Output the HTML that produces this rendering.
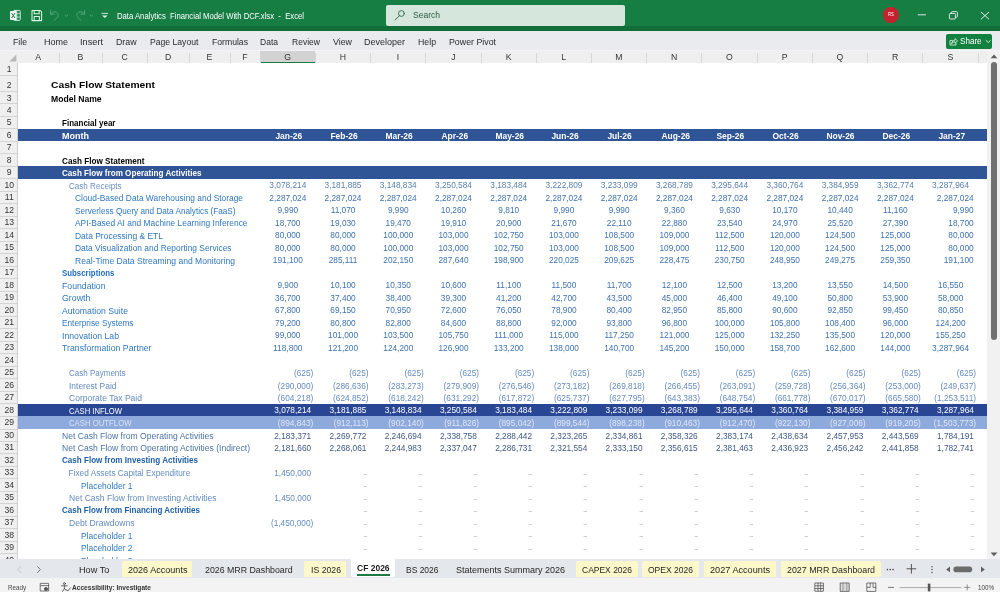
<!DOCTYPE html><html><head><meta charset="utf-8"><title>Excel</title><style>
html,body{margin:0;padding:0;}body{width:1000px;height:592px;position:relative;overflow:hidden;background:#fff;font-family:"Liberation Sans",sans-serif;}
#r{position:absolute;left:0;top:0;width:1000px;height:592px;transform:translateZ(0);will-change:transform;}#r div{position:absolute;}#r span{position:absolute;white-space:pre;line-height:1;display:block;}
#r svg{position:absolute;left:0;top:0;}
</style></head><body><div id="r">
<div style="left:0.00px;top:0.00px;width:1000.00px;height:31.00px;background:#167d43;"></div>
<div style="left:0.00px;top:26.40px;width:1000.00px;height:4.60px;background:#116e39;"></div>
<div style="left:385.60px;top:5.00px;width:239.40px;height:20.80px;background:#d5e7dc;border-radius:2px;"></div>
<div style="left:883.30px;top:7.20px;width:15.80px;height:15.80px;background:#c4222f;border-radius:50%;"></div>
<div style="left:0.00px;top:31.00px;width:1000.00px;height:18.60px;background:#e9ebef;"></div>
<div style="left:0.00px;top:49.60px;width:1000.00px;height:1.80px;background:#f4f4f5;"></div>
<div style="left:946.00px;top:33.50px;width:46.00px;height:15.00px;background:#12803f;border-radius:2px;"></div>
<div style="left:0.00px;top:51.30px;width:987.00px;height:11.90px;background:#efefef;"></div>
<div style="left:260.00px;top:51.30px;width:55.23px;height:11.90px;background:#d2d2d2;"></div>
<div style="left:260.00px;top:62.00px;width:55.23px;height:1.20px;background:#1e7a45;"></div>
<div style="left:0.00px;top:62.70px;width:987.00px;height:0.70px;background:#d0d0d0;"></div>
<div style="left:0.00px;top:62.60px;width:17.50px;height:0.80px;background:#bcbcbc;"></div>
<div style="left:17.50px;top:63.20px;width:969.50px;height:496.00px;background:#ffffff;"></div>
<div style="left:0.00px;top:63.20px;width:17.50px;height:496.00px;background:#efefef;"></div>
<div style="left:17.00px;top:63.20px;width:0.60px;height:496.00px;background:#cfcfcf;"></div>
<div style="left:58.60px;top:52.80px;width:0.80px;height:9.90px;background:#d6d6d6;"></div>
<div style="left:101.60px;top:52.80px;width:0.80px;height:9.90px;background:#d6d6d6;"></div>
<div style="left:147.10px;top:52.80px;width:0.80px;height:9.90px;background:#d6d6d6;"></div>
<div style="left:188.60px;top:52.80px;width:0.80px;height:9.90px;background:#d6d6d6;"></div>
<div style="left:229.60px;top:52.80px;width:0.80px;height:9.90px;background:#d6d6d6;"></div>
<div style="left:259.60px;top:52.80px;width:0.80px;height:9.90px;background:#d6d6d6;"></div>
<div style="left:314.83px;top:52.80px;width:0.80px;height:9.90px;background:#d6d6d6;"></div>
<div style="left:370.06px;top:52.80px;width:0.80px;height:9.90px;background:#d6d6d6;"></div>
<div style="left:425.29px;top:52.80px;width:0.80px;height:9.90px;background:#d6d6d6;"></div>
<div style="left:480.52px;top:52.80px;width:0.80px;height:9.90px;background:#d6d6d6;"></div>
<div style="left:535.75px;top:52.80px;width:0.80px;height:9.90px;background:#d6d6d6;"></div>
<div style="left:590.98px;top:52.80px;width:0.80px;height:9.90px;background:#d6d6d6;"></div>
<div style="left:646.21px;top:52.80px;width:0.80px;height:9.90px;background:#d6d6d6;"></div>
<div style="left:701.44px;top:52.80px;width:0.80px;height:9.90px;background:#d6d6d6;"></div>
<div style="left:756.67px;top:52.80px;width:0.80px;height:9.90px;background:#d6d6d6;"></div>
<div style="left:811.90px;top:52.80px;width:0.80px;height:9.90px;background:#d6d6d6;"></div>
<div style="left:867.13px;top:52.80px;width:0.80px;height:9.90px;background:#d6d6d6;"></div>
<div style="left:922.36px;top:52.80px;width:0.80px;height:9.90px;background:#d6d6d6;"></div>
<div style="left:977.59px;top:52.80px;width:0.80px;height:9.90px;background:#d6d6d6;"></div>
<div style="left:0.00px;top:75.05px;width:17.20px;height:0.70px;background:#d4d4d4;"></div>
<div style="left:0.00px;top:91.45px;width:17.20px;height:0.70px;background:#d4d4d4;"></div>
<div style="left:0.00px;top:103.35px;width:17.20px;height:0.70px;background:#d4d4d4;"></div>
<div style="left:0.00px;top:115.85px;width:17.20px;height:0.70px;background:#d4d4d4;"></div>
<div style="left:0.00px;top:128.35px;width:17.20px;height:0.70px;background:#d4d4d4;"></div>
<div style="left:0.00px;top:140.85px;width:17.20px;height:0.70px;background:#d4d4d4;"></div>
<div style="left:0.00px;top:153.35px;width:17.20px;height:0.70px;background:#d4d4d4;"></div>
<div style="left:0.00px;top:165.85px;width:17.20px;height:0.70px;background:#d4d4d4;"></div>
<div style="left:0.00px;top:178.35px;width:17.20px;height:0.70px;background:#d4d4d4;"></div>
<div style="left:0.00px;top:190.85px;width:17.20px;height:0.70px;background:#d4d4d4;"></div>
<div style="left:0.00px;top:203.35px;width:17.20px;height:0.70px;background:#d4d4d4;"></div>
<div style="left:0.00px;top:215.85px;width:17.20px;height:0.70px;background:#d4d4d4;"></div>
<div style="left:0.00px;top:228.35px;width:17.20px;height:0.70px;background:#d4d4d4;"></div>
<div style="left:0.00px;top:240.85px;width:17.20px;height:0.70px;background:#d4d4d4;"></div>
<div style="left:0.00px;top:253.35px;width:17.20px;height:0.70px;background:#d4d4d4;"></div>
<div style="left:0.00px;top:265.85px;width:17.20px;height:0.70px;background:#d4d4d4;"></div>
<div style="left:0.00px;top:278.35px;width:17.20px;height:0.70px;background:#d4d4d4;"></div>
<div style="left:0.00px;top:290.85px;width:17.20px;height:0.70px;background:#d4d4d4;"></div>
<div style="left:0.00px;top:303.35px;width:17.20px;height:0.70px;background:#d4d4d4;"></div>
<div style="left:0.00px;top:315.85px;width:17.20px;height:0.70px;background:#d4d4d4;"></div>
<div style="left:0.00px;top:328.35px;width:17.20px;height:0.70px;background:#d4d4d4;"></div>
<div style="left:0.00px;top:340.85px;width:17.20px;height:0.70px;background:#d4d4d4;"></div>
<div style="left:0.00px;top:353.35px;width:17.20px;height:0.70px;background:#d4d4d4;"></div>
<div style="left:0.00px;top:365.85px;width:17.20px;height:0.70px;background:#d4d4d4;"></div>
<div style="left:0.00px;top:378.35px;width:17.20px;height:0.70px;background:#d4d4d4;"></div>
<div style="left:0.00px;top:390.85px;width:17.20px;height:0.70px;background:#d4d4d4;"></div>
<div style="left:0.00px;top:403.35px;width:17.20px;height:0.70px;background:#d4d4d4;"></div>
<div style="left:0.00px;top:415.55px;width:17.20px;height:0.70px;background:#d4d4d4;"></div>
<div style="left:0.00px;top:428.65px;width:17.20px;height:0.70px;background:#d4d4d4;"></div>
<div style="left:0.00px;top:440.85px;width:17.20px;height:0.70px;background:#d4d4d4;"></div>
<div style="left:0.00px;top:453.35px;width:17.20px;height:0.70px;background:#d4d4d4;"></div>
<div style="left:0.00px;top:465.85px;width:17.20px;height:0.70px;background:#d4d4d4;"></div>
<div style="left:0.00px;top:478.35px;width:17.20px;height:0.70px;background:#d4d4d4;"></div>
<div style="left:0.00px;top:490.85px;width:17.20px;height:0.70px;background:#d4d4d4;"></div>
<div style="left:0.00px;top:503.35px;width:17.20px;height:0.70px;background:#d4d4d4;"></div>
<div style="left:0.00px;top:515.85px;width:17.20px;height:0.70px;background:#d4d4d4;"></div>
<div style="left:0.00px;top:528.35px;width:17.20px;height:0.70px;background:#d4d4d4;"></div>
<div style="left:0.00px;top:540.85px;width:17.20px;height:0.70px;background:#d4d4d4;"></div>
<div style="left:0.00px;top:553.35px;width:17.20px;height:0.70px;background:#d4d4d4;"></div>
<div style="left:17.50px;top:128.70px;width:969.50px;height:12.50px;background:#2f5597;"></div>
<div style="left:17.50px;top:166.20px;width:969.50px;height:12.50px;background:#2f5597;"></div>
<div style="left:17.50px;top:403.70px;width:969.50px;height:12.20px;background:#294694;"></div>
<div style="left:17.50px;top:415.90px;width:969.50px;height:13.10px;background:#8ea9db;"></div>
<div style="left:987.00px;top:51.30px;width:13.00px;height:507.90px;background:#f1f1f1;"></div>
<div style="left:991.00px;top:61.80px;width:6.00px;height:278.20px;background:#707070;border-radius:3px;"></div>
<span style="top:11.50px;font-size:8.6px;color:#ffffff;left:117.00px;transform:scaleX(0.896);transform-origin:0 50%;">Data Analytics  Financial Model With DCF.xlsx  -  Excel</span>
<span style="top:12.90px;font-size:4.6px;color:#ffffff;left:888.30px;transform:scaleX(0.908);transform-origin:0 50%;">RS</span>
<span style="top:10.90px;font-size:9px;color:#2b5a3f;left:412.80px;transform:scaleX(0.946);transform-origin:0 50%;">Search</span>
<span style="top:38.25px;font-size:9.3px;color:#2a2a2a;left:13.00px;transform:scaleX(0.934);transform-origin:0 50%;">File</span>
<span style="top:38.25px;font-size:9.3px;color:#2a2a2a;left:44.00px;transform:scaleX(0.967);transform-origin:0 50%;">Home</span>
<span style="top:38.25px;font-size:9.3px;color:#2a2a2a;left:80.00px;transform:scaleX(0.989);transform-origin:0 50%;">Insert</span>
<span style="top:38.25px;font-size:9.3px;color:#2a2a2a;left:116.40px;transform:scaleX(0.949);transform-origin:0 50%;">Draw</span>
<span style="top:38.25px;font-size:9.3px;color:#2a2a2a;left:149.60px;transform:scaleX(0.927);transform-origin:0 50%;">Page Layout</span>
<span style="top:38.25px;font-size:9.3px;color:#2a2a2a;left:211.60px;transform:scaleX(0.929);transform-origin:0 50%;">Formulas</span>
<span style="top:38.25px;font-size:9.3px;color:#2a2a2a;left:260.00px;transform:scaleX(0.916);transform-origin:0 50%;">Data</span>
<span style="top:38.25px;font-size:9.3px;color:#2a2a2a;left:292.00px;transform:scaleX(0.919);transform-origin:0 50%;">Review</span>
<span style="top:38.25px;font-size:9.3px;color:#2a2a2a;left:333.00px;transform:scaleX(0.951);transform-origin:0 50%;">View</span>
<span style="top:38.25px;font-size:9.3px;color:#2a2a2a;left:364.00px;transform:scaleX(0.967);transform-origin:0 50%;">Developer</span>
<span style="top:38.25px;font-size:9.3px;color:#2a2a2a;left:418.00px;transform:scaleX(0.941);transform-origin:0 50%;">Help</span>
<span style="top:38.25px;font-size:9.3px;color:#2a2a2a;left:449.00px;transform:scaleX(0.947);transform-origin:0 50%;">Power Pivot</span>
<span style="top:36.80px;font-size:9px;color:#ffffff;left:959.80px;transform:scaleX(0.899);transform-origin:0 50%;">Share</span>
<span style="top:53.05px;font-size:8.7px;color:#353535;left:35.35px;">A</span>
<span style="top:53.05px;font-size:8.7px;color:#353535;left:77.60px;">B</span>
<span style="top:53.05px;font-size:8.7px;color:#353535;left:121.61px;">C</span>
<span style="top:53.05px;font-size:8.7px;color:#353535;left:165.11px;">D</span>
<span style="top:53.05px;font-size:8.7px;color:#353535;left:206.60px;">E</span>
<span style="top:53.05px;font-size:8.7px;color:#353535;left:242.34px;">F</span>
<span style="top:53.05px;font-size:8.7px;color:#353535;left:284.23px;">G</span>
<span style="top:53.05px;font-size:8.7px;color:#353535;left:339.70px;">H</span>
<span style="top:53.05px;font-size:8.7px;color:#353535;left:396.86px;">I</span>
<span style="top:53.05px;font-size:8.7px;color:#353535;left:451.13px;">J</span>
<span style="top:53.05px;font-size:8.7px;color:#353535;left:505.64px;">K</span>
<span style="top:53.05px;font-size:8.7px;color:#353535;left:561.34px;">L</span>
<span style="top:53.05px;font-size:8.7px;color:#353535;left:615.37px;">M</span>
<span style="top:53.05px;font-size:8.7px;color:#353535;left:671.08px;">N</span>
<span style="top:53.05px;font-size:8.7px;color:#353535;left:726.07px;">O</span>
<span style="top:53.05px;font-size:8.7px;color:#353535;left:781.79px;">P</span>
<span style="top:53.05px;font-size:8.7px;color:#353535;left:836.53px;">Q</span>
<span style="top:53.05px;font-size:8.7px;color:#353535;left:892.00px;">R</span>
<span style="top:53.05px;font-size:8.7px;color:#353535;left:947.48px;">S</span>
<span style="top:65.30px;font-size:8.6px;color:#353535;left:6.81px;">1</span>
<span style="top:81.30px;font-size:8.6px;color:#353535;left:6.81px;">2</span>
<span style="top:93.75px;font-size:8.6px;color:#353535;left:6.81px;">3</span>
<span style="top:105.95px;font-size:8.6px;color:#353535;left:6.81px;">4</span>
<span style="top:118.45px;font-size:8.6px;color:#353535;left:6.81px;">5</span>
<span style="top:130.95px;font-size:8.6px;color:#353535;left:6.81px;">6</span>
<span style="top:143.45px;font-size:8.6px;color:#353535;left:6.81px;">7</span>
<span style="top:155.95px;font-size:8.6px;color:#353535;left:6.81px;">8</span>
<span style="top:168.45px;font-size:8.6px;color:#353535;left:6.81px;">9</span>
<span style="top:180.95px;font-size:8.6px;color:#353535;left:4.42px;">10</span>
<span style="top:193.45px;font-size:8.6px;color:#353535;left:4.74px;">11</span>
<span style="top:205.95px;font-size:8.6px;color:#353535;left:4.42px;">12</span>
<span style="top:218.45px;font-size:8.6px;color:#353535;left:4.42px;">13</span>
<span style="top:230.95px;font-size:8.6px;color:#353535;left:4.42px;">14</span>
<span style="top:243.45px;font-size:8.6px;color:#353535;left:4.42px;">15</span>
<span style="top:255.95px;font-size:8.6px;color:#353535;left:4.42px;">16</span>
<span style="top:268.45px;font-size:8.6px;color:#353535;left:4.42px;">17</span>
<span style="top:280.95px;font-size:8.6px;color:#353535;left:4.42px;">18</span>
<span style="top:293.45px;font-size:8.6px;color:#353535;left:4.42px;">19</span>
<span style="top:305.95px;font-size:8.6px;color:#353535;left:4.42px;">20</span>
<span style="top:318.45px;font-size:8.6px;color:#353535;left:4.42px;">21</span>
<span style="top:330.95px;font-size:8.6px;color:#353535;left:4.42px;">22</span>
<span style="top:343.45px;font-size:8.6px;color:#353535;left:4.42px;">23</span>
<span style="top:355.95px;font-size:8.6px;color:#353535;left:4.42px;">24</span>
<span style="top:368.45px;font-size:8.6px;color:#353535;left:4.42px;">25</span>
<span style="top:380.95px;font-size:8.6px;color:#353535;left:4.42px;">26</span>
<span style="top:393.45px;font-size:8.6px;color:#353535;left:4.42px;">27</span>
<span style="top:405.80px;font-size:8.6px;color:#353535;left:4.42px;">28</span>
<span style="top:418.45px;font-size:8.6px;color:#353535;left:4.42px;">29</span>
<span style="top:431.10px;font-size:8.6px;color:#353535;left:4.42px;">30</span>
<span style="top:443.45px;font-size:8.6px;color:#353535;left:4.42px;">31</span>
<span style="top:455.95px;font-size:8.6px;color:#353535;left:4.42px;">32</span>
<span style="top:468.45px;font-size:8.6px;color:#353535;left:4.42px;">33</span>
<span style="top:480.95px;font-size:8.6px;color:#353535;left:4.42px;">34</span>
<span style="top:493.45px;font-size:8.6px;color:#353535;left:4.42px;">35</span>
<span style="top:505.95px;font-size:8.6px;color:#353535;left:4.42px;">36</span>
<span style="top:518.45px;font-size:8.6px;color:#353535;left:4.42px;">37</span>
<span style="top:530.95px;font-size:8.6px;color:#353535;left:4.42px;">38</span>
<span style="top:543.45px;font-size:8.6px;color:#353535;left:4.42px;">39</span>
<span style="top:555.95px;font-size:8.6px;color:#353535;left:4.42px;">40</span>
<span style="top:80.05px;font-size:9.9px;color:#000;font-weight:700;left:50.80px;transform:scaleX(1.041);transform-origin:0 50%;">Cash Flow Statement</span>
<span style="top:94.55px;font-size:8.7px;color:#000;font-weight:700;left:50.80px;transform:scaleX(0.989);transform-origin:0 50%;">Model Name</span>
<span style="top:119.00px;font-size:8.7px;color:#000;font-weight:700;left:62.30px;transform:scaleX(0.923);transform-origin:0 50%;">Financial year</span>
<span style="top:131.50px;font-size:8.7px;color:#fff;font-weight:700;left:62.30px;transform:scaleX(1.036);transform-origin:0 50%;">Month</span>
<span style="top:156.50px;font-size:8.7px;color:#000;font-weight:700;left:62.30px;transform:scaleX(0.939);transform-origin:0 50%;">Cash Flow Statement</span>
<span style="top:169.00px;font-size:8.7px;color:#fff;font-weight:700;left:62.30px;transform:scaleX(0.934);transform-origin:0 50%;">Cash Flow from Operating Activities</span>
<span style="top:131.50px;font-size:8.7px;color:#fff;font-weight:700;left:274.86px;transform:scaleX(0.970);transform-origin:50% 50%;">Jan-26</span>
<span style="top:131.50px;font-size:8.7px;color:#fff;font-weight:700;left:329.86px;transform:scaleX(0.970);transform-origin:50% 50%;">Feb-26</span>
<span style="top:131.50px;font-size:8.7px;color:#fff;font-weight:700;left:385.09px;transform:scaleX(0.970);transform-origin:50% 50%;">Mar-26</span>
<span style="top:131.50px;font-size:8.7px;color:#fff;font-weight:700;left:440.55px;transform:scaleX(0.970);transform-origin:50% 50%;">Apr-26</span>
<span style="top:131.50px;font-size:8.7px;color:#fff;font-weight:700;left:494.84px;transform:scaleX(0.970);transform-origin:50% 50%;">May-26</span>
<span style="top:131.50px;font-size:8.7px;color:#fff;font-weight:700;left:550.78px;transform:scaleX(0.970);transform-origin:50% 50%;">Jun-26</span>
<span style="top:131.50px;font-size:8.7px;color:#fff;font-weight:700;left:607.42px;transform:scaleX(0.970);transform-origin:50% 50%;">Jul-26</span>
<span style="top:131.50px;font-size:8.7px;color:#fff;font-weight:700;left:660.54px;transform:scaleX(0.970);transform-origin:50% 50%;">Aug-26</span>
<span style="top:131.50px;font-size:8.7px;color:#fff;font-weight:700;left:716.23px;transform:scaleX(0.970);transform-origin:50% 50%;">Sep-26</span>
<span style="top:131.50px;font-size:8.7px;color:#fff;font-weight:700;left:772.17px;transform:scaleX(0.970);transform-origin:50% 50%;">Oct-26</span>
<span style="top:131.50px;font-size:8.7px;color:#fff;font-weight:700;left:826.47px;transform:scaleX(0.970);transform-origin:50% 50%;">Nov-26</span>
<span style="top:131.50px;font-size:8.7px;color:#fff;font-weight:700;left:881.92px;transform:scaleX(0.970);transform-origin:50% 50%;">Dec-26</span>
<span style="top:131.50px;font-size:8.7px;color:#fff;font-weight:700;left:937.62px;transform:scaleX(0.970);transform-origin:50% 50%;">Jan-27</span>
<span style="top:181.65px;font-size:8.3px;color:#6b8fbf;left:68.50px;transform:scaleX(0.973);transform-origin:0 50%;">Cash Receipts</span>
<span style="top:194.15px;font-size:8.3px;color:#2f78c0;left:74.50px;transform:scaleX(1.011);transform-origin:0 50%;">Cloud-Based Data Warehousing and Storage</span>
<span style="top:206.65px;font-size:8.3px;color:#2f78c0;left:74.50px;transform:scaleX(0.986);transform-origin:0 50%;">Serverless Query and Data Analytics (FaaS)</span>
<span style="top:219.15px;font-size:8.3px;color:#2f78c0;left:74.50px;transform:scaleX(1.011);transform-origin:0 50%;">API-Based AI and Machine Learning Inference</span>
<span style="top:231.65px;font-size:8.3px;color:#2f78c0;left:74.50px;transform:scaleX(1.020);transform-origin:0 50%;">Data Processing &amp; ETL</span>
<span style="top:244.15px;font-size:8.3px;color:#2f78c0;left:74.50px;transform:scaleX(1.011);transform-origin:0 50%;">Data Visualization and Reporting Services</span>
<span style="top:256.65px;font-size:8.3px;color:#2f78c0;left:74.50px;transform:scaleX(1.032);transform-origin:0 50%;">Real-Time Data Streaming and Monitoring</span>
<span style="top:268.95px;font-size:8.7px;color:#1f6dc0;font-weight:700;left:62.00px;transform:scaleX(0.906);transform-origin:0 50%;">Subscriptions</span>
<span style="top:281.65px;font-size:8.3px;color:#2f78c0;left:62.00px;transform:scaleX(1.047);transform-origin:0 50%;">Foundation</span>
<span style="top:294.15px;font-size:8.3px;color:#2f78c0;left:62.00px;transform:scaleX(1.065);transform-origin:0 50%;">Growth</span>
<span style="top:306.65px;font-size:8.3px;color:#2f78c0;left:62.00px;transform:scaleX(1.045);transform-origin:0 50%;">Automation Suite</span>
<span style="top:319.15px;font-size:8.3px;color:#2f78c0;left:62.00px;transform:scaleX(0.994);transform-origin:0 50%;">Enterprise Systems</span>
<span style="top:331.65px;font-size:8.3px;color:#2f78c0;left:62.00px;transform:scaleX(1.047);transform-origin:0 50%;">Innovation Lab</span>
<span style="top:344.15px;font-size:8.3px;color:#2f78c0;left:62.00px;transform:scaleX(1.053);transform-origin:0 50%;">Transformation Partner</span>
<span style="top:369.15px;font-size:8.3px;color:#648cc0;left:68.50px;transform:scaleX(0.965);transform-origin:0 50%;">Cash Payments</span>
<span style="top:381.65px;font-size:8.3px;color:#648cc0;left:68.50px;transform:scaleX(1.019);transform-origin:0 50%;">Interest Paid</span>
<span style="top:394.15px;font-size:8.3px;color:#648cc0;left:68.50px;transform:scaleX(1.030);transform-origin:0 50%;">Corporate Tax Paid</span>
<span style="top:406.50px;font-size:8.3px;color:#ffffff;left:68.50px;transform:scaleX(0.920);transform-origin:0 50%;">CASH INFLOW</span>
<span style="top:419.15px;font-size:8.3px;color:#d9e2f5;left:68.50px;transform:scaleX(0.935);transform-origin:0 50%;">CASH OUTFLOW</span>
<span style="top:431.80px;font-size:8.3px;color:#4a74a8;left:62.00px;transform:scaleX(1.033);transform-origin:0 50%;">Net Cash Flow from Operating Activities</span>
<span style="top:444.15px;font-size:8.3px;color:#4a74a8;left:62.00px;transform:scaleX(1.035);transform-origin:0 50%;">Net Cash Flow from Operating Activities (Indirect)</span>
<span style="top:456.45px;font-size:8.7px;color:#1f5fa8;font-weight:700;left:62.00px;transform:scaleX(0.929);transform-origin:0 50%;">Cash Flow from Investing Activities</span>
<span style="top:469.15px;font-size:8.3px;color:#648cc0;left:68.50px;">Fixed Assets Capital Expenditure</span>
<span style="top:481.65px;font-size:8.3px;color:#2f78c0;left:81.00px;transform:scaleX(1.015);transform-origin:0 50%;">Placeholder 1</span>
<span style="top:494.15px;font-size:8.3px;color:#648cc0;left:68.50px;transform:scaleX(1.029);transform-origin:0 50%;">Net Cash Flow from Investing Activities</span>
<span style="top:506.45px;font-size:8.7px;color:#1f5fa8;font-weight:700;left:62.00px;transform:scaleX(0.924);transform-origin:0 50%;">Cash Flow from Financing Activities</span>
<span style="top:519.15px;font-size:8.3px;color:#648cc0;left:68.50px;transform:scaleX(1.037);transform-origin:0 50%;">Debt Drawdowns</span>
<span style="top:531.65px;font-size:8.3px;color:#2f78c0;left:81.00px;transform:scaleX(1.015);transform-origin:0 50%;">Placeholder 1</span>
<span style="top:544.15px;font-size:8.3px;color:#2f78c0;left:81.00px;transform:scaleX(1.015);transform-origin:0 50%;">Placeholder 2</span>
<span style="top:556.65px;font-size:8.3px;color:#2f78c0;left:81.00px;transform:scaleX(1.015);transform-origin:0 50%;">Placeholder 3</span>
<span style="top:181.20px;font-size:8.3px;color:#5a80b2;left:269.35px;">3,078,214</span>
<span style="top:181.20px;font-size:8.3px;color:#5a80b2;left:324.58px;">3,181,885</span>
<span style="top:181.20px;font-size:8.3px;color:#5a80b2;left:379.81px;">3,148,834</span>
<span style="top:181.20px;font-size:8.3px;color:#5a80b2;left:435.04px;">3,250,584</span>
<span style="top:181.20px;font-size:8.3px;color:#5a80b2;left:490.27px;">3,183,484</span>
<span style="top:181.20px;font-size:8.3px;color:#5a80b2;left:545.50px;">3,222,809</span>
<span style="top:181.20px;font-size:8.3px;color:#5a80b2;left:600.73px;">3,233,099</span>
<span style="top:181.20px;font-size:8.3px;color:#5a80b2;left:655.96px;">3,268,789</span>
<span style="top:181.20px;font-size:8.3px;color:#5a80b2;left:711.19px;">3,295,644</span>
<span style="top:181.20px;font-size:8.3px;color:#5a80b2;left:766.42px;">3,360,764</span>
<span style="top:181.20px;font-size:8.3px;color:#5a80b2;left:821.65px;">3,384,959</span>
<span style="top:181.20px;font-size:8.3px;color:#5a80b2;left:876.88px;">3,362,774</span>
<span style="top:181.20px;font-size:8.3px;color:#5a80b2;left:932.11px;">3,287,964</span>
<span style="top:193.70px;font-size:8.3px;color:#3f73b0;left:269.35px;">2,287,024</span>
<span style="top:193.70px;font-size:8.3px;color:#3f73b0;left:324.58px;">2,287,024</span>
<span style="top:193.70px;font-size:8.3px;color:#3f73b0;left:379.81px;">2,287,024</span>
<span style="top:193.70px;font-size:8.3px;color:#3f73b0;left:435.04px;">2,287,024</span>
<span style="top:193.70px;font-size:8.3px;color:#3f73b0;left:490.27px;">2,287,024</span>
<span style="top:193.70px;font-size:8.3px;color:#3f73b0;left:545.50px;">2,287,024</span>
<span style="top:193.70px;font-size:8.3px;color:#3f73b0;left:600.73px;">2,287,024</span>
<span style="top:193.70px;font-size:8.3px;color:#3f73b0;left:655.96px;">2,287,024</span>
<span style="top:193.70px;font-size:8.3px;color:#3f73b0;left:711.19px;">2,287,024</span>
<span style="top:193.70px;font-size:8.3px;color:#3f73b0;left:766.42px;">2,287,024</span>
<span style="top:193.70px;font-size:8.3px;color:#3f73b0;left:821.65px;">2,287,024</span>
<span style="top:193.70px;font-size:8.3px;color:#3f73b0;left:876.88px;">2,287,024</span>
<span style="top:193.70px;font-size:8.3px;color:#3f73b0;right:26.31px;">2,287,024</span>
<span style="top:206.20px;font-size:8.3px;color:#3f73b0;left:277.43px;">9,990</span>
<span style="top:206.20px;font-size:8.3px;color:#3f73b0;left:330.66px;">11,070</span>
<span style="top:206.20px;font-size:8.3px;color:#3f73b0;left:387.89px;">9,990</span>
<span style="top:206.20px;font-size:8.3px;color:#3f73b0;left:440.81px;">10,260</span>
<span style="top:206.20px;font-size:8.3px;color:#3f73b0;left:498.35px;">9,810</span>
<span style="top:206.20px;font-size:8.3px;color:#3f73b0;left:553.58px;">9,990</span>
<span style="top:206.20px;font-size:8.3px;color:#3f73b0;left:608.81px;">9,990</span>
<span style="top:206.20px;font-size:8.3px;color:#3f73b0;left:664.04px;">9,360</span>
<span style="top:206.20px;font-size:8.3px;color:#3f73b0;left:719.27px;">9,630</span>
<span style="top:206.20px;font-size:8.3px;color:#3f73b0;left:772.19px;">10,170</span>
<span style="top:206.20px;font-size:8.3px;color:#3f73b0;left:827.42px;">10,440</span>
<span style="top:206.20px;font-size:8.3px;color:#3f73b0;left:882.96px;">11,160</span>
<span style="top:206.20px;font-size:8.3px;color:#3f73b0;right:26.31px;">9,990</span>
<span style="top:218.70px;font-size:8.3px;color:#3f73b0;left:275.12px;">18,700</span>
<span style="top:218.70px;font-size:8.3px;color:#3f73b0;left:330.35px;">19,030</span>
<span style="top:218.70px;font-size:8.3px;color:#3f73b0;left:385.58px;">19,470</span>
<span style="top:218.70px;font-size:8.3px;color:#3f73b0;left:440.81px;">19,910</span>
<span style="top:218.70px;font-size:8.3px;color:#3f73b0;left:496.04px;">20,900</span>
<span style="top:218.70px;font-size:8.3px;color:#3f73b0;left:551.27px;">21,670</span>
<span style="top:218.70px;font-size:8.3px;color:#3f73b0;left:606.81px;">22,110</span>
<span style="top:218.70px;font-size:8.3px;color:#3f73b0;left:661.73px;">22,880</span>
<span style="top:218.70px;font-size:8.3px;color:#3f73b0;left:716.96px;">23,540</span>
<span style="top:218.70px;font-size:8.3px;color:#3f73b0;left:772.19px;">24,970</span>
<span style="top:218.70px;font-size:8.3px;color:#3f73b0;left:827.42px;">25,520</span>
<span style="top:218.70px;font-size:8.3px;color:#3f73b0;left:882.65px;">27,390</span>
<span style="top:218.70px;font-size:8.3px;color:#3f73b0;right:26.31px;">18,700</span>
<span style="top:231.20px;font-size:8.3px;color:#3f73b0;left:275.12px;">80,000</span>
<span style="top:231.20px;font-size:8.3px;color:#3f73b0;left:330.35px;">80,000</span>
<span style="top:231.20px;font-size:8.3px;color:#3f73b0;left:383.28px;">100,000</span>
<span style="top:231.20px;font-size:8.3px;color:#3f73b0;left:438.51px;">103,000</span>
<span style="top:231.20px;font-size:8.3px;color:#3f73b0;left:493.74px;">102,750</span>
<span style="top:231.20px;font-size:8.3px;color:#3f73b0;left:548.97px;">103,000</span>
<span style="top:231.20px;font-size:8.3px;color:#3f73b0;left:604.20px;">108,500</span>
<span style="top:231.20px;font-size:8.3px;color:#3f73b0;left:659.43px;">109,000</span>
<span style="top:231.20px;font-size:8.3px;color:#3f73b0;left:714.96px;">112,500</span>
<span style="top:231.20px;font-size:8.3px;color:#3f73b0;left:769.89px;">120,000</span>
<span style="top:231.20px;font-size:8.3px;color:#3f73b0;left:825.12px;">124,500</span>
<span style="top:231.20px;font-size:8.3px;color:#3f73b0;left:880.35px;">125,000</span>
<span style="top:231.20px;font-size:8.3px;color:#3f73b0;right:26.31px;">80,000</span>
<span style="top:243.70px;font-size:8.3px;color:#3f73b0;left:275.12px;">80,000</span>
<span style="top:243.70px;font-size:8.3px;color:#3f73b0;left:330.35px;">80,000</span>
<span style="top:243.70px;font-size:8.3px;color:#3f73b0;left:383.28px;">100,000</span>
<span style="top:243.70px;font-size:8.3px;color:#3f73b0;left:438.51px;">103,000</span>
<span style="top:243.70px;font-size:8.3px;color:#3f73b0;left:493.74px;">102,750</span>
<span style="top:243.70px;font-size:8.3px;color:#3f73b0;left:548.97px;">103,000</span>
<span style="top:243.70px;font-size:8.3px;color:#3f73b0;left:604.20px;">108,500</span>
<span style="top:243.70px;font-size:8.3px;color:#3f73b0;left:659.43px;">109,000</span>
<span style="top:243.70px;font-size:8.3px;color:#3f73b0;left:714.96px;">112,500</span>
<span style="top:243.70px;font-size:8.3px;color:#3f73b0;left:769.89px;">120,000</span>
<span style="top:243.70px;font-size:8.3px;color:#3f73b0;left:825.12px;">124,500</span>
<span style="top:243.70px;font-size:8.3px;color:#3f73b0;left:880.35px;">125,000</span>
<span style="top:243.70px;font-size:8.3px;color:#3f73b0;right:26.31px;">80,000</span>
<span style="top:256.20px;font-size:8.3px;color:#3f73b0;left:272.81px;">191,100</span>
<span style="top:256.20px;font-size:8.3px;color:#3f73b0;left:328.66px;">285,111</span>
<span style="top:256.20px;font-size:8.3px;color:#3f73b0;left:383.28px;">202,150</span>
<span style="top:256.20px;font-size:8.3px;color:#3f73b0;left:438.51px;">287,640</span>
<span style="top:256.20px;font-size:8.3px;color:#3f73b0;left:493.74px;">198,900</span>
<span style="top:256.20px;font-size:8.3px;color:#3f73b0;left:548.97px;">220,025</span>
<span style="top:256.20px;font-size:8.3px;color:#3f73b0;left:604.20px;">209,625</span>
<span style="top:256.20px;font-size:8.3px;color:#3f73b0;left:659.43px;">228,475</span>
<span style="top:256.20px;font-size:8.3px;color:#3f73b0;left:714.66px;">230,750</span>
<span style="top:256.20px;font-size:8.3px;color:#3f73b0;left:769.89px;">248,950</span>
<span style="top:256.20px;font-size:8.3px;color:#3f73b0;left:825.12px;">249,275</span>
<span style="top:256.20px;font-size:8.3px;color:#3f73b0;left:880.35px;">259,350</span>
<span style="top:256.20px;font-size:8.3px;color:#3f73b0;right:26.31px;">191,100</span>
<span style="top:281.20px;font-size:8.3px;color:#3f73b0;left:277.43px;">9,900</span>
<span style="top:281.20px;font-size:8.3px;color:#3f73b0;left:330.35px;">10,100</span>
<span style="top:281.20px;font-size:8.3px;color:#3f73b0;left:385.58px;">10,350</span>
<span style="top:281.20px;font-size:8.3px;color:#3f73b0;left:440.81px;">10,600</span>
<span style="top:281.20px;font-size:8.3px;color:#3f73b0;left:496.35px;">11,100</span>
<span style="top:281.20px;font-size:8.3px;color:#3f73b0;left:551.58px;">11,500</span>
<span style="top:281.20px;font-size:8.3px;color:#3f73b0;left:606.81px;">11,700</span>
<span style="top:281.20px;font-size:8.3px;color:#3f73b0;left:661.73px;">12,100</span>
<span style="top:281.20px;font-size:8.3px;color:#3f73b0;left:716.96px;">12,500</span>
<span style="top:281.20px;font-size:8.3px;color:#3f73b0;left:772.19px;">13,200</span>
<span style="top:281.20px;font-size:8.3px;color:#3f73b0;left:827.42px;">13,550</span>
<span style="top:281.20px;font-size:8.3px;color:#3f73b0;left:882.65px;">14,500</span>
<span style="top:281.20px;font-size:8.3px;color:#3f73b0;left:937.88px;">16,550</span>
<span style="top:293.70px;font-size:8.3px;color:#3f73b0;left:275.12px;">36,700</span>
<span style="top:293.70px;font-size:8.3px;color:#3f73b0;left:330.35px;">37,400</span>
<span style="top:293.70px;font-size:8.3px;color:#3f73b0;left:385.58px;">38,400</span>
<span style="top:293.70px;font-size:8.3px;color:#3f73b0;left:440.81px;">39,300</span>
<span style="top:293.70px;font-size:8.3px;color:#3f73b0;left:496.04px;">41,200</span>
<span style="top:293.70px;font-size:8.3px;color:#3f73b0;left:551.27px;">42,700</span>
<span style="top:293.70px;font-size:8.3px;color:#3f73b0;left:606.50px;">43,500</span>
<span style="top:293.70px;font-size:8.3px;color:#3f73b0;left:661.73px;">45,000</span>
<span style="top:293.70px;font-size:8.3px;color:#3f73b0;left:716.96px;">46,400</span>
<span style="top:293.70px;font-size:8.3px;color:#3f73b0;left:772.19px;">49,100</span>
<span style="top:293.70px;font-size:8.3px;color:#3f73b0;left:827.42px;">50,800</span>
<span style="top:293.70px;font-size:8.3px;color:#3f73b0;left:882.65px;">53,900</span>
<span style="top:293.70px;font-size:8.3px;color:#3f73b0;left:937.88px;">58,000</span>
<span style="top:306.20px;font-size:8.3px;color:#3f73b0;left:275.12px;">67,800</span>
<span style="top:306.20px;font-size:8.3px;color:#3f73b0;left:330.35px;">69,150</span>
<span style="top:306.20px;font-size:8.3px;color:#3f73b0;left:385.58px;">70,950</span>
<span style="top:306.20px;font-size:8.3px;color:#3f73b0;left:440.81px;">72,600</span>
<span style="top:306.20px;font-size:8.3px;color:#3f73b0;left:496.04px;">76,050</span>
<span style="top:306.20px;font-size:8.3px;color:#3f73b0;left:551.27px;">78,900</span>
<span style="top:306.20px;font-size:8.3px;color:#3f73b0;left:606.50px;">80,400</span>
<span style="top:306.20px;font-size:8.3px;color:#3f73b0;left:661.73px;">82,950</span>
<span style="top:306.20px;font-size:8.3px;color:#3f73b0;left:716.96px;">85,800</span>
<span style="top:306.20px;font-size:8.3px;color:#3f73b0;left:772.19px;">90,600</span>
<span style="top:306.20px;font-size:8.3px;color:#3f73b0;left:827.42px;">92,850</span>
<span style="top:306.20px;font-size:8.3px;color:#3f73b0;left:882.65px;">99,450</span>
<span style="top:306.20px;font-size:8.3px;color:#3f73b0;left:937.88px;">80,850</span>
<span style="top:318.70px;font-size:8.3px;color:#3f73b0;left:275.12px;">79,200</span>
<span style="top:318.70px;font-size:8.3px;color:#3f73b0;left:330.35px;">80,800</span>
<span style="top:318.70px;font-size:8.3px;color:#3f73b0;left:385.58px;">82,800</span>
<span style="top:318.70px;font-size:8.3px;color:#3f73b0;left:440.81px;">84,600</span>
<span style="top:318.70px;font-size:8.3px;color:#3f73b0;left:496.04px;">88,800</span>
<span style="top:318.70px;font-size:8.3px;color:#3f73b0;left:551.27px;">92,000</span>
<span style="top:318.70px;font-size:8.3px;color:#3f73b0;left:606.50px;">93,800</span>
<span style="top:318.70px;font-size:8.3px;color:#3f73b0;left:661.73px;">96,800</span>
<span style="top:318.70px;font-size:8.3px;color:#3f73b0;left:714.66px;">100,000</span>
<span style="top:318.70px;font-size:8.3px;color:#3f73b0;left:769.89px;">105,800</span>
<span style="top:318.70px;font-size:8.3px;color:#3f73b0;left:825.12px;">108,400</span>
<span style="top:318.70px;font-size:8.3px;color:#3f73b0;left:882.65px;">96,000</span>
<span style="top:318.70px;font-size:8.3px;color:#3f73b0;left:935.58px;">124,200</span>
<span style="top:331.20px;font-size:8.3px;color:#3f73b0;left:275.12px;">99,000</span>
<span style="top:331.20px;font-size:8.3px;color:#3f73b0;left:328.05px;">101,000</span>
<span style="top:331.20px;font-size:8.3px;color:#3f73b0;left:383.28px;">103,500</span>
<span style="top:331.20px;font-size:8.3px;color:#3f73b0;left:438.51px;">105,750</span>
<span style="top:331.20px;font-size:8.3px;color:#3f73b0;left:494.35px;">111,000</span>
<span style="top:331.20px;font-size:8.3px;color:#3f73b0;left:549.27px;">115,000</span>
<span style="top:331.20px;font-size:8.3px;color:#3f73b0;left:604.50px;">117,250</span>
<span style="top:331.20px;font-size:8.3px;color:#3f73b0;left:659.43px;">121,000</span>
<span style="top:331.20px;font-size:8.3px;color:#3f73b0;left:714.66px;">125,000</span>
<span style="top:331.20px;font-size:8.3px;color:#3f73b0;left:769.89px;">132,250</span>
<span style="top:331.20px;font-size:8.3px;color:#3f73b0;left:825.12px;">135,500</span>
<span style="top:331.20px;font-size:8.3px;color:#3f73b0;left:880.35px;">120,000</span>
<span style="top:331.20px;font-size:8.3px;color:#3f73b0;left:935.58px;">155,250</span>
<span style="top:343.70px;font-size:8.3px;color:#3f73b0;left:273.12px;">118,800</span>
<span style="top:343.70px;font-size:8.3px;color:#3f73b0;left:328.05px;">121,200</span>
<span style="top:343.70px;font-size:8.3px;color:#3f73b0;left:383.28px;">124,200</span>
<span style="top:343.70px;font-size:8.3px;color:#3f73b0;left:438.51px;">126,900</span>
<span style="top:343.70px;font-size:8.3px;color:#3f73b0;left:493.74px;">133,200</span>
<span style="top:343.70px;font-size:8.3px;color:#3f73b0;left:548.97px;">138,000</span>
<span style="top:343.70px;font-size:8.3px;color:#3f73b0;left:604.20px;">140,700</span>
<span style="top:343.70px;font-size:8.3px;color:#3f73b0;left:659.43px;">145,200</span>
<span style="top:343.70px;font-size:8.3px;color:#3f73b0;left:714.66px;">150,000</span>
<span style="top:343.70px;font-size:8.3px;color:#3f73b0;left:769.89px;">158,700</span>
<span style="top:343.70px;font-size:8.3px;color:#3f73b0;left:825.12px;">162,600</span>
<span style="top:343.70px;font-size:8.3px;color:#3f73b0;left:880.35px;">144,000</span>
<span style="top:343.70px;font-size:8.3px;color:#3f73b0;left:932.11px;">3,287,964</span>
<span style="top:369.00px;font-size:8.3px;color:#648cc0;right:686.67px;">(625)</span>
<span style="top:369.00px;font-size:8.3px;color:#648cc0;right:631.44px;">(625)</span>
<span style="top:369.00px;font-size:8.3px;color:#648cc0;right:576.21px;">(625)</span>
<span style="top:369.00px;font-size:8.3px;color:#648cc0;right:520.98px;">(625)</span>
<span style="top:369.00px;font-size:8.3px;color:#648cc0;right:465.75px;">(625)</span>
<span style="top:369.00px;font-size:8.3px;color:#648cc0;right:410.52px;">(625)</span>
<span style="top:369.00px;font-size:8.3px;color:#648cc0;right:355.29px;">(625)</span>
<span style="top:369.00px;font-size:8.3px;color:#648cc0;right:300.06px;">(625)</span>
<span style="top:369.00px;font-size:8.3px;color:#648cc0;right:244.83px;">(625)</span>
<span style="top:369.00px;font-size:8.3px;color:#648cc0;right:189.60px;">(625)</span>
<span style="top:369.00px;font-size:8.3px;color:#648cc0;right:134.37px;">(625)</span>
<span style="top:369.00px;font-size:8.3px;color:#648cc0;right:79.14px;">(625)</span>
<span style="top:369.00px;font-size:8.3px;color:#648cc0;right:23.91px;">(625)</span>
<span style="top:381.50px;font-size:8.3px;color:#648cc0;right:686.67px;">(290,000)</span>
<span style="top:381.50px;font-size:8.3px;color:#648cc0;right:631.44px;">(286,636)</span>
<span style="top:381.50px;font-size:8.3px;color:#648cc0;right:576.21px;">(283,273)</span>
<span style="top:381.50px;font-size:8.3px;color:#648cc0;right:520.98px;">(279,909)</span>
<span style="top:381.50px;font-size:8.3px;color:#648cc0;right:465.75px;">(276,546)</span>
<span style="top:381.50px;font-size:8.3px;color:#648cc0;right:410.52px;">(273,182)</span>
<span style="top:381.50px;font-size:8.3px;color:#648cc0;right:355.29px;">(269,818)</span>
<span style="top:381.50px;font-size:8.3px;color:#648cc0;right:300.06px;">(266,455)</span>
<span style="top:381.50px;font-size:8.3px;color:#648cc0;right:244.83px;">(263,091)</span>
<span style="top:381.50px;font-size:8.3px;color:#648cc0;right:189.60px;">(259,728)</span>
<span style="top:381.50px;font-size:8.3px;color:#648cc0;right:134.37px;">(256,364)</span>
<span style="top:381.50px;font-size:8.3px;color:#648cc0;right:79.14px;">(253,000)</span>
<span style="top:381.50px;font-size:8.3px;color:#648cc0;right:23.91px;">(249,637)</span>
<span style="top:394.00px;font-size:8.3px;color:#648cc0;right:686.67px;">(604,218)</span>
<span style="top:394.00px;font-size:8.3px;color:#648cc0;right:631.44px;">(624,852)</span>
<span style="top:394.00px;font-size:8.3px;color:#648cc0;right:576.21px;">(618,242)</span>
<span style="top:394.00px;font-size:8.3px;color:#648cc0;right:520.98px;">(631,292)</span>
<span style="top:394.00px;font-size:8.3px;color:#648cc0;right:465.75px;">(617,872)</span>
<span style="top:394.00px;font-size:8.3px;color:#648cc0;right:410.52px;">(625,737)</span>
<span style="top:394.00px;font-size:8.3px;color:#648cc0;right:355.29px;">(627,795)</span>
<span style="top:394.00px;font-size:8.3px;color:#648cc0;right:300.06px;">(643,383)</span>
<span style="top:394.00px;font-size:8.3px;color:#648cc0;right:244.83px;">(648,754)</span>
<span style="top:394.00px;font-size:8.3px;color:#648cc0;right:189.60px;">(661,778)</span>
<span style="top:394.00px;font-size:8.3px;color:#648cc0;right:134.37px;">(670,017)</span>
<span style="top:394.00px;font-size:8.3px;color:#648cc0;right:79.14px;">(665,580)</span>
<span style="top:394.00px;font-size:8.3px;color:#648cc0;right:23.91px;">(1,253,511)</span>
<span style="top:406.35px;font-size:8.3px;color:#ffffff;right:688.87px;">3,078,214</span>
<span style="top:406.35px;font-size:8.3px;color:#ffffff;right:633.64px;">3,181,885</span>
<span style="top:406.35px;font-size:8.3px;color:#ffffff;right:578.41px;">3,148,834</span>
<span style="top:406.35px;font-size:8.3px;color:#ffffff;right:523.18px;">3,250,584</span>
<span style="top:406.35px;font-size:8.3px;color:#ffffff;right:467.95px;">3,183,484</span>
<span style="top:406.35px;font-size:8.3px;color:#ffffff;right:412.72px;">3,222,809</span>
<span style="top:406.35px;font-size:8.3px;color:#ffffff;right:357.49px;">3,233,099</span>
<span style="top:406.35px;font-size:8.3px;color:#ffffff;right:302.26px;">3,268,789</span>
<span style="top:406.35px;font-size:8.3px;color:#ffffff;right:247.03px;">3,295,644</span>
<span style="top:406.35px;font-size:8.3px;color:#ffffff;right:191.80px;">3,360,764</span>
<span style="top:406.35px;font-size:8.3px;color:#ffffff;right:136.57px;">3,384,959</span>
<span style="top:406.35px;font-size:8.3px;color:#ffffff;right:81.34px;">3,362,774</span>
<span style="top:406.35px;font-size:8.3px;color:#ffffff;right:26.11px;">3,287,964</span>
<span style="top:419.00px;font-size:8.3px;color:#e0e7f7;right:686.67px;">(894,843)</span>
<span style="top:419.00px;font-size:8.3px;color:#e0e7f7;right:631.44px;">(912,113)</span>
<span style="top:419.00px;font-size:8.3px;color:#e0e7f7;right:576.21px;">(902,140)</span>
<span style="top:419.00px;font-size:8.3px;color:#e0e7f7;right:520.98px;">(911,826)</span>
<span style="top:419.00px;font-size:8.3px;color:#e0e7f7;right:465.75px;">(895,042)</span>
<span style="top:419.00px;font-size:8.3px;color:#e0e7f7;right:410.52px;">(899,544)</span>
<span style="top:419.00px;font-size:8.3px;color:#e0e7f7;right:355.29px;">(898,238)</span>
<span style="top:419.00px;font-size:8.3px;color:#e0e7f7;right:300.06px;">(910,463)</span>
<span style="top:419.00px;font-size:8.3px;color:#e0e7f7;right:244.83px;">(912,470)</span>
<span style="top:419.00px;font-size:8.3px;color:#e0e7f7;right:189.60px;">(922,130)</span>
<span style="top:419.00px;font-size:8.3px;color:#e0e7f7;right:134.37px;">(927,006)</span>
<span style="top:419.00px;font-size:8.3px;color:#e0e7f7;right:79.14px;">(919,205)</span>
<span style="top:419.00px;font-size:8.3px;color:#e0e7f7;right:23.91px;">(1,503,773)</span>
<span style="top:431.65px;font-size:8.3px;color:#3d5984;right:688.87px;">2,183,371</span>
<span style="top:431.65px;font-size:8.3px;color:#3d5984;right:633.64px;">2,269,772</span>
<span style="top:431.65px;font-size:8.3px;color:#3d5984;right:578.41px;">2,246,694</span>
<span style="top:431.65px;font-size:8.3px;color:#3d5984;right:523.18px;">2,338,758</span>
<span style="top:431.65px;font-size:8.3px;color:#3d5984;right:467.95px;">2,288,442</span>
<span style="top:431.65px;font-size:8.3px;color:#3d5984;right:412.72px;">2,323,265</span>
<span style="top:431.65px;font-size:8.3px;color:#3d5984;right:357.49px;">2,334,861</span>
<span style="top:431.65px;font-size:8.3px;color:#3d5984;right:302.26px;">2,358,326</span>
<span style="top:431.65px;font-size:8.3px;color:#3d5984;right:247.03px;">2,383,174</span>
<span style="top:431.65px;font-size:8.3px;color:#3d5984;right:191.80px;">2,438,634</span>
<span style="top:431.65px;font-size:8.3px;color:#3d5984;right:136.57px;">2,457,953</span>
<span style="top:431.65px;font-size:8.3px;color:#3d5984;right:81.34px;">2,443,569</span>
<span style="top:431.65px;font-size:8.3px;color:#3d5984;right:26.11px;">1,784,191</span>
<span style="top:444.00px;font-size:8.3px;color:#3d5984;right:688.87px;">2,181,660</span>
<span style="top:444.00px;font-size:8.3px;color:#3d5984;right:633.64px;">2,268,061</span>
<span style="top:444.00px;font-size:8.3px;color:#3d5984;right:578.41px;">2,244,983</span>
<span style="top:444.00px;font-size:8.3px;color:#3d5984;right:523.18px;">2,337,047</span>
<span style="top:444.00px;font-size:8.3px;color:#3d5984;right:467.95px;">2,286,731</span>
<span style="top:444.00px;font-size:8.3px;color:#3d5984;right:412.72px;">2,321,554</span>
<span style="top:444.00px;font-size:8.3px;color:#3d5984;right:357.49px;">2,333,150</span>
<span style="top:444.00px;font-size:8.3px;color:#3d5984;right:302.26px;">2,356,615</span>
<span style="top:444.00px;font-size:8.3px;color:#3d5984;right:247.03px;">2,381,463</span>
<span style="top:444.00px;font-size:8.3px;color:#3d5984;right:191.80px;">2,436,923</span>
<span style="top:444.00px;font-size:8.3px;color:#3d5984;right:136.57px;">2,456,242</span>
<span style="top:444.00px;font-size:8.3px;color:#3d5984;right:81.34px;">2,441,858</span>
<span style="top:444.00px;font-size:8.3px;color:#3d5984;right:26.11px;">1,782,741</span>
<span style="top:469.00px;font-size:8.3px;color:#648cc0;right:688.87px;">1,450,000</span>
<span style="top:469.50px;font-size:8.3px;color:#b9bfca;right:632.74px;transform:scaleX(1.700);transform-origin:100% 50%;">-</span>
<span style="top:469.50px;font-size:8.3px;color:#b9bfca;right:577.51px;transform:scaleX(1.700);transform-origin:100% 50%;">-</span>
<span style="top:469.50px;font-size:8.3px;color:#b9bfca;right:522.28px;transform:scaleX(1.700);transform-origin:100% 50%;">-</span>
<span style="top:469.50px;font-size:8.3px;color:#b9bfca;right:467.05px;transform:scaleX(1.700);transform-origin:100% 50%;">-</span>
<span style="top:469.50px;font-size:8.3px;color:#b9bfca;right:411.82px;transform:scaleX(1.700);transform-origin:100% 50%;">-</span>
<span style="top:469.50px;font-size:8.3px;color:#b9bfca;right:356.59px;transform:scaleX(1.700);transform-origin:100% 50%;">-</span>
<span style="top:469.50px;font-size:8.3px;color:#b9bfca;right:301.36px;transform:scaleX(1.700);transform-origin:100% 50%;">-</span>
<span style="top:469.50px;font-size:8.3px;color:#b9bfca;right:246.13px;transform:scaleX(1.700);transform-origin:100% 50%;">-</span>
<span style="top:469.50px;font-size:8.3px;color:#b9bfca;right:190.90px;transform:scaleX(1.700);transform-origin:100% 50%;">-</span>
<span style="top:469.50px;font-size:8.3px;color:#b9bfca;right:135.67px;transform:scaleX(1.700);transform-origin:100% 50%;">-</span>
<span style="top:469.50px;font-size:8.3px;color:#b9bfca;right:80.44px;transform:scaleX(1.700);transform-origin:100% 50%;">-</span>
<span style="top:469.50px;font-size:8.3px;color:#b9bfca;right:25.21px;transform:scaleX(1.700);transform-origin:100% 50%;">-</span>
<span style="top:482.00px;font-size:8.3px;color:#b9bfca;right:632.74px;transform:scaleX(1.700);transform-origin:100% 50%;">-</span>
<span style="top:482.00px;font-size:8.3px;color:#b9bfca;right:577.51px;transform:scaleX(1.700);transform-origin:100% 50%;">-</span>
<span style="top:482.00px;font-size:8.3px;color:#b9bfca;right:522.28px;transform:scaleX(1.700);transform-origin:100% 50%;">-</span>
<span style="top:482.00px;font-size:8.3px;color:#b9bfca;right:467.05px;transform:scaleX(1.700);transform-origin:100% 50%;">-</span>
<span style="top:482.00px;font-size:8.3px;color:#b9bfca;right:411.82px;transform:scaleX(1.700);transform-origin:100% 50%;">-</span>
<span style="top:482.00px;font-size:8.3px;color:#b9bfca;right:356.59px;transform:scaleX(1.700);transform-origin:100% 50%;">-</span>
<span style="top:482.00px;font-size:8.3px;color:#b9bfca;right:301.36px;transform:scaleX(1.700);transform-origin:100% 50%;">-</span>
<span style="top:482.00px;font-size:8.3px;color:#b9bfca;right:246.13px;transform:scaleX(1.700);transform-origin:100% 50%;">-</span>
<span style="top:482.00px;font-size:8.3px;color:#b9bfca;right:190.90px;transform:scaleX(1.700);transform-origin:100% 50%;">-</span>
<span style="top:482.00px;font-size:8.3px;color:#b9bfca;right:135.67px;transform:scaleX(1.700);transform-origin:100% 50%;">-</span>
<span style="top:482.00px;font-size:8.3px;color:#b9bfca;right:80.44px;transform:scaleX(1.700);transform-origin:100% 50%;">-</span>
<span style="top:482.00px;font-size:8.3px;color:#b9bfca;right:25.21px;transform:scaleX(1.700);transform-origin:100% 50%;">-</span>
<span style="top:494.00px;font-size:8.3px;color:#648cc0;right:688.87px;">1,450,000</span>
<span style="top:494.50px;font-size:8.3px;color:#b9bfca;right:632.74px;transform:scaleX(1.700);transform-origin:100% 50%;">-</span>
<span style="top:494.50px;font-size:8.3px;color:#b9bfca;right:577.51px;transform:scaleX(1.700);transform-origin:100% 50%;">-</span>
<span style="top:494.50px;font-size:8.3px;color:#b9bfca;right:522.28px;transform:scaleX(1.700);transform-origin:100% 50%;">-</span>
<span style="top:494.50px;font-size:8.3px;color:#b9bfca;right:467.05px;transform:scaleX(1.700);transform-origin:100% 50%;">-</span>
<span style="top:494.50px;font-size:8.3px;color:#b9bfca;right:411.82px;transform:scaleX(1.700);transform-origin:100% 50%;">-</span>
<span style="top:494.50px;font-size:8.3px;color:#b9bfca;right:356.59px;transform:scaleX(1.700);transform-origin:100% 50%;">-</span>
<span style="top:494.50px;font-size:8.3px;color:#b9bfca;right:301.36px;transform:scaleX(1.700);transform-origin:100% 50%;">-</span>
<span style="top:494.50px;font-size:8.3px;color:#b9bfca;right:246.13px;transform:scaleX(1.700);transform-origin:100% 50%;">-</span>
<span style="top:494.50px;font-size:8.3px;color:#b9bfca;right:190.90px;transform:scaleX(1.700);transform-origin:100% 50%;">-</span>
<span style="top:494.50px;font-size:8.3px;color:#b9bfca;right:135.67px;transform:scaleX(1.700);transform-origin:100% 50%;">-</span>
<span style="top:494.50px;font-size:8.3px;color:#b9bfca;right:80.44px;transform:scaleX(1.700);transform-origin:100% 50%;">-</span>
<span style="top:494.50px;font-size:8.3px;color:#b9bfca;right:25.21px;transform:scaleX(1.700);transform-origin:100% 50%;">-</span>
<span style="top:507.00px;font-size:8.3px;color:#b9bfca;right:632.74px;transform:scaleX(1.700);transform-origin:100% 50%;">-</span>
<span style="top:507.00px;font-size:8.3px;color:#b9bfca;right:577.51px;transform:scaleX(1.700);transform-origin:100% 50%;">-</span>
<span style="top:507.00px;font-size:8.3px;color:#b9bfca;right:522.28px;transform:scaleX(1.700);transform-origin:100% 50%;">-</span>
<span style="top:507.00px;font-size:8.3px;color:#b9bfca;right:467.05px;transform:scaleX(1.700);transform-origin:100% 50%;">-</span>
<span style="top:507.00px;font-size:8.3px;color:#b9bfca;right:411.82px;transform:scaleX(1.700);transform-origin:100% 50%;">-</span>
<span style="top:507.00px;font-size:8.3px;color:#b9bfca;right:356.59px;transform:scaleX(1.700);transform-origin:100% 50%;">-</span>
<span style="top:507.00px;font-size:8.3px;color:#b9bfca;right:301.36px;transform:scaleX(1.700);transform-origin:100% 50%;">-</span>
<span style="top:507.00px;font-size:8.3px;color:#b9bfca;right:246.13px;transform:scaleX(1.700);transform-origin:100% 50%;">-</span>
<span style="top:507.00px;font-size:8.3px;color:#b9bfca;right:190.90px;transform:scaleX(1.700);transform-origin:100% 50%;">-</span>
<span style="top:507.00px;font-size:8.3px;color:#b9bfca;right:135.67px;transform:scaleX(1.700);transform-origin:100% 50%;">-</span>
<span style="top:507.00px;font-size:8.3px;color:#b9bfca;right:80.44px;transform:scaleX(1.700);transform-origin:100% 50%;">-</span>
<span style="top:507.00px;font-size:8.3px;color:#b9bfca;right:25.21px;transform:scaleX(1.700);transform-origin:100% 50%;">-</span>
<span style="top:519.00px;font-size:8.3px;color:#648cc0;right:686.67px;">(1,450,000)</span>
<span style="top:519.50px;font-size:8.3px;color:#b9bfca;right:632.74px;transform:scaleX(1.700);transform-origin:100% 50%;">-</span>
<span style="top:519.50px;font-size:8.3px;color:#b9bfca;right:577.51px;transform:scaleX(1.700);transform-origin:100% 50%;">-</span>
<span style="top:519.50px;font-size:8.3px;color:#b9bfca;right:522.28px;transform:scaleX(1.700);transform-origin:100% 50%;">-</span>
<span style="top:519.50px;font-size:8.3px;color:#b9bfca;right:467.05px;transform:scaleX(1.700);transform-origin:100% 50%;">-</span>
<span style="top:519.50px;font-size:8.3px;color:#b9bfca;right:411.82px;transform:scaleX(1.700);transform-origin:100% 50%;">-</span>
<span style="top:519.50px;font-size:8.3px;color:#b9bfca;right:356.59px;transform:scaleX(1.700);transform-origin:100% 50%;">-</span>
<span style="top:519.50px;font-size:8.3px;color:#b9bfca;right:301.36px;transform:scaleX(1.700);transform-origin:100% 50%;">-</span>
<span style="top:519.50px;font-size:8.3px;color:#b9bfca;right:246.13px;transform:scaleX(1.700);transform-origin:100% 50%;">-</span>
<span style="top:519.50px;font-size:8.3px;color:#b9bfca;right:190.90px;transform:scaleX(1.700);transform-origin:100% 50%;">-</span>
<span style="top:519.50px;font-size:8.3px;color:#b9bfca;right:135.67px;transform:scaleX(1.700);transform-origin:100% 50%;">-</span>
<span style="top:519.50px;font-size:8.3px;color:#b9bfca;right:80.44px;transform:scaleX(1.700);transform-origin:100% 50%;">-</span>
<span style="top:519.50px;font-size:8.3px;color:#b9bfca;right:25.21px;transform:scaleX(1.700);transform-origin:100% 50%;">-</span>
<span style="top:532.00px;font-size:8.3px;color:#b9bfca;right:632.74px;transform:scaleX(1.700);transform-origin:100% 50%;">-</span>
<span style="top:532.00px;font-size:8.3px;color:#b9bfca;right:577.51px;transform:scaleX(1.700);transform-origin:100% 50%;">-</span>
<span style="top:532.00px;font-size:8.3px;color:#b9bfca;right:522.28px;transform:scaleX(1.700);transform-origin:100% 50%;">-</span>
<span style="top:532.00px;font-size:8.3px;color:#b9bfca;right:467.05px;transform:scaleX(1.700);transform-origin:100% 50%;">-</span>
<span style="top:532.00px;font-size:8.3px;color:#b9bfca;right:411.82px;transform:scaleX(1.700);transform-origin:100% 50%;">-</span>
<span style="top:532.00px;font-size:8.3px;color:#b9bfca;right:356.59px;transform:scaleX(1.700);transform-origin:100% 50%;">-</span>
<span style="top:532.00px;font-size:8.3px;color:#b9bfca;right:301.36px;transform:scaleX(1.700);transform-origin:100% 50%;">-</span>
<span style="top:532.00px;font-size:8.3px;color:#b9bfca;right:246.13px;transform:scaleX(1.700);transform-origin:100% 50%;">-</span>
<span style="top:532.00px;font-size:8.3px;color:#b9bfca;right:190.90px;transform:scaleX(1.700);transform-origin:100% 50%;">-</span>
<span style="top:532.00px;font-size:8.3px;color:#b9bfca;right:135.67px;transform:scaleX(1.700);transform-origin:100% 50%;">-</span>
<span style="top:532.00px;font-size:8.3px;color:#b9bfca;right:80.44px;transform:scaleX(1.700);transform-origin:100% 50%;">-</span>
<span style="top:532.00px;font-size:8.3px;color:#b9bfca;right:25.21px;transform:scaleX(1.700);transform-origin:100% 50%;">-</span>
<span style="top:544.50px;font-size:8.3px;color:#b9bfca;right:632.74px;transform:scaleX(1.700);transform-origin:100% 50%;">-</span>
<span style="top:544.50px;font-size:8.3px;color:#b9bfca;right:577.51px;transform:scaleX(1.700);transform-origin:100% 50%;">-</span>
<span style="top:544.50px;font-size:8.3px;color:#b9bfca;right:522.28px;transform:scaleX(1.700);transform-origin:100% 50%;">-</span>
<span style="top:544.50px;font-size:8.3px;color:#b9bfca;right:467.05px;transform:scaleX(1.700);transform-origin:100% 50%;">-</span>
<span style="top:544.50px;font-size:8.3px;color:#b9bfca;right:411.82px;transform:scaleX(1.700);transform-origin:100% 50%;">-</span>
<span style="top:544.50px;font-size:8.3px;color:#b9bfca;right:356.59px;transform:scaleX(1.700);transform-origin:100% 50%;">-</span>
<span style="top:544.50px;font-size:8.3px;color:#b9bfca;right:301.36px;transform:scaleX(1.700);transform-origin:100% 50%;">-</span>
<span style="top:544.50px;font-size:8.3px;color:#b9bfca;right:246.13px;transform:scaleX(1.700);transform-origin:100% 50%;">-</span>
<span style="top:544.50px;font-size:8.3px;color:#b9bfca;right:190.90px;transform:scaleX(1.700);transform-origin:100% 50%;">-</span>
<span style="top:544.50px;font-size:8.3px;color:#b9bfca;right:135.67px;transform:scaleX(1.700);transform-origin:100% 50%;">-</span>
<span style="top:544.50px;font-size:8.3px;color:#b9bfca;right:80.44px;transform:scaleX(1.700);transform-origin:100% 50%;">-</span>
<span style="top:544.50px;font-size:8.3px;color:#b9bfca;right:25.21px;transform:scaleX(1.700);transform-origin:100% 50%;">-</span>
<div style="left:0.00px;top:559.20px;width:1000.00px;height:18.80px;background:#e4e7eb;"></div>
<div style="left:0.00px;top:578.00px;width:1000.00px;height:14.00px;background:#f3f3f3;"></div>
<div style="left:122.00px;top:560.80px;width:70.00px;height:16.40px;background:#fcf8ca;border-radius:1.5px;"></div>
<div style="left:304.40px;top:560.80px;width:42.00px;height:16.40px;background:#fcf8ca;border-radius:1.5px;"></div>
<div style="left:576.00px;top:560.80px;width:62.00px;height:16.40px;background:#fcf8ca;border-radius:1.5px;"></div>
<div style="left:642.00px;top:560.80px;width:57.00px;height:16.40px;background:#fcf8ca;border-radius:1.5px;"></div>
<div style="left:704.00px;top:560.80px;width:72.00px;height:16.40px;background:#fcf8ca;border-radius:1.5px;"></div>
<div style="left:781.00px;top:560.80px;width:100.00px;height:16.40px;background:#fcf8ca;border-radius:1.5px;"></div>
<span style="top:565.15px;font-size:9.7px;color:#262626;left:79.00px;transform:scaleX(0.946);transform-origin:0 50%;">How To</span>
<span style="top:565.15px;font-size:9.7px;color:#262626;left:127.60px;transform:scaleX(0.935);transform-origin:0 50%;">2026 Accounts</span>
<span style="top:565.15px;font-size:9.7px;color:#262626;left:204.50px;transform:scaleX(0.908);transform-origin:0 50%;">2026 MRR Dashboard</span>
<span style="top:565.15px;font-size:9.7px;color:#262626;left:310.50px;transform:scaleX(0.898);transform-origin:0 50%;">IS 2026</span>
<span style="top:565.15px;font-size:9.7px;color:#262626;left:405.50px;transform:scaleX(0.874);transform-origin:0 50%;">BS 2026</span>
<span style="top:565.15px;font-size:9.7px;color:#262626;left:456.00px;transform:scaleX(0.929);transform-origin:0 50%;">Statements Summary 2026</span>
<span style="top:565.15px;font-size:9.7px;color:#262626;left:582.00px;transform:scaleX(0.876);transform-origin:0 50%;">CAPEX 2026</span>
<span style="top:565.15px;font-size:9.7px;color:#262626;left:648.00px;transform:scaleX(0.879);transform-origin:0 50%;">OPEX 2026</span>
<span style="top:565.15px;font-size:9.7px;color:#262626;left:710.00px;transform:scaleX(0.944);transform-origin:0 50%;">2027 Accounts</span>
<span style="top:565.15px;font-size:9.7px;color:#262626;left:787.00px;transform:scaleX(0.913);transform-origin:0 50%;">2027 MRR Dashboard</span>
<div style="left:351.00px;top:558.70px;width:44.40px;height:18.80px;background:#ffffff;border-radius:0 0 2px 2px;"></div>
<span style="top:563.35px;font-size:9.7px;color:#1d1d1d;font-weight:700;left:357.00px;transform:scaleX(0.877);transform-origin:0 50%;">CF 2026</span>
<div style="left:357.00px;top:574.40px;width:32.60px;height:1.20px;background:#1e7a45;"></div>
<span style="top:584.10px;font-size:7px;color:#444;left:7.50px;transform:scaleX(0.890);transform-origin:0 50%;">Ready</span>
<span style="top:584.10px;font-size:7px;color:#333;font-weight:700;left:72.40px;transform:scaleX(0.944);transform-origin:0 50%;">Accessibility: Investigate</span>
<span style="top:584.10px;font-size:7px;color:#444;left:978.00px;transform:scaleX(0.894);transform-origin:0 50%;">100%</span>
<svg width="1000" height="592" viewBox="0 0 1000 592" fill="none" stroke-linecap="round" stroke-linejoin="round">
<!-- excel logo -->
<g>
<rect x="13.6" y="10.4" width="6.6" height="10" rx="0.8" stroke="#e9f7ee" stroke-width="0.9"/>
<path d="M16.8 13.7H20 M16.8 17H20 M16.9 10.6V20.2" stroke="#e9f7ee" stroke-width="0.7"/>
<rect x="10" y="11" width="6.6" height="9" rx="1" fill="#f4fbf6"/>
<path d="M11.8 13.4L14.8 17.7M14.8 13.4L11.8 17.7" stroke="#167d43" stroke-width="1"/>
</g>
<!-- save -->
<g stroke="#dbf5e5" stroke-width="1.05">
<path d="M32 10.5H40.2L41.6 11.9V20.6H32Z"/>
<path d="M34.2 10.7V13.8H39.2V10.7"/>
<path d="M34.2 20.4V16.4H39.4V20.4"/>
</g>
<!-- undo (disabled) -->
<g stroke="#58a97a" stroke-width="0.95">
<path d="M50.5 10.6V14.2H54.1"/>
<path d="M50.8 14C52.5 11.6 55.6 11 57.4 12.9C59.2 14.9 58 17.6 54.2 20.4"/>
<path d="M64.9 14.9L66.4 16.3L67.9 14.9" stroke-width="0.8"/>
</g>
<!-- redo (disabled) -->
<g stroke="#58a97a" stroke-width="0.95">
<path d="M84.6 10.6V14.2H81"/>
<path d="M84.3 14C82.6 11.6 79.5 11 77.7 12.9C75.9 14.9 77.1 17.6 80.9 20.4"/>
<path d="M89.8 14.9L91.3 16.3L92.8 14.9" stroke-width="0.8"/>
</g>
<!-- customize QAT -->
<path d="M102 13.4H107.6" stroke="#e3f5ea" stroke-width="0.9"/>
<path d="M102 15.4H107.6L104.8 18.1Z" fill="#e3f5ea" stroke="none"/>
<!-- search icon -->
<circle cx="401.4" cy="13.5" r="2.9" stroke="#2f6548" stroke-width="0.9"/>
<path d="M399.3 15.7L395 20" stroke="#2f6548" stroke-width="0.9"/>
<!-- avatar -->
<!-- window controls -->
<path d="M918.2 14.8H925.6" stroke="#eaf6ef" stroke-width="0.9"/>
<rect x="949.4" y="13.4" width="6" height="5.6" rx="1" stroke="#eaf6ef" stroke-width="0.9"/>
<path d="M951.4 13.2V12.6C951.4 12 951.9 11.6 952.4 11.6H956.4C957 11.6 957.4 12 957.4 12.6V16.4C957.4 17 957 17.4 956.4 17.4H955.6" stroke="#eaf6ef" stroke-width="0.9"/>
<path d="M981.2 12.2L988.8 19M988.8 12.2L981.2 19" stroke="#eaf6ef" stroke-width="0.95"/>
<!-- share icon -->
<g stroke="#e4f6ea" stroke-width="0.8">
<path d="M952.4 40.4H950V45H956V43.2"/>
<path d="M951.8 43.4C952 41.2 953.2 40.2 955 40.2V38.6L957.6 40.9L955 43.2V41.7C953.6 41.7 952.6 42.2 951.8 43.4Z"/>
<path d="M986 40.4L988.2 42.5L990.4 40.4" stroke-width="0.9"/>
</g>
<!-- select all triangle -->
<path d="M16.4 54.6V61.6H9.2Z" fill="#b9b9b9" stroke="none"/>
<!-- vscroll arrows -->
<path d="M990.6 58.3L994 54.6L997.4 58.3Z" fill="#5e5e5e" stroke="none"/>
<path d="M990.6 552.6L994 556.3L997.4 552.6Z" fill="#5e5e5e" stroke="none"/>
<!-- tab nav arrows -->
<path d="M20.8 566.6L18 569.6L20.8 572.6" stroke="#c2c6cb" stroke-width="1"/>
<path d="M37.6 566.6L40.4 569.6L37.6 572.6" stroke="#777" stroke-width="1"/>
<!-- more tabs ... -->
<g fill="#444" stroke="none"><circle cx="887.4" cy="569.6" r="0.8"/><circle cx="890.2" cy="569.6" r="0.8"/><circle cx="893" cy="569.6" r="0.8"/></g>
<!-- new sheet + -->
<path d="M907 568.8H915.8M911.4 564.4V573.2" stroke="#444" stroke-width="0.9"/>
<!-- grip dots -->
<g fill="#555" stroke="none"><circle cx="932" cy="566.8" r="0.75"/><circle cx="932" cy="569.6" r="0.75"/><circle cx="932" cy="572.4" r="0.75"/></g>
<!-- hscroll -->
<path d="M950 566.6L946.2 569.4L950 572.2Z" fill="#5e5e5e" stroke="none"/>
<rect x="953.4" y="566.5" width="18.8" height="5.7" rx="2.8" fill="#6b6b6b" stroke="none"/>
<path d="M981 566.6L984.8 569.4L981 572.2Z" fill="#5e5e5e" stroke="none"/>
<!-- status icons: macro -->
<g stroke="#555" stroke-width="0.8">
<rect x="40.6" y="583.4" width="8" height="7.6" />
<path d="M40.6 585.6H48.6" />
<circle cx="46" cy="589" r="1.6" fill="#555"/>
</g>
<!-- accessibility -->
<g stroke="#444" stroke-width="0.8">
<circle cx="64.4" cy="583.6" r="1"/>
<path d="M61.4 585.8H67.4M64.4 585.8V588.4L62.6 591.4M64.4 588.4L66 590.4"/>
<path d="M66.4 589.6L67.8 591L70.4 587.8"/>
</g>
<!-- view icons -->
<g stroke="#555" stroke-width="0.8">
<rect x="815.2" y="583" width="8.2" height="8.2"/>
<path d="M815.2 585.8H823.4M815.2 588.5H823.4M818 583V591.2M820.7 583V591.2"/>
<rect x="840.6" y="583" width="8.6" height="8.4" fill="#d9d9d9"/>
<path d="M843 583V591.4M846.8 583V591.4" stroke="#888"/>
<rect x="867.2" y="583" width="8.6" height="8.4"/>
<path d="M867.2 587.4H870.2V583.4M873 583.4V587.4H875.8"/>
</g>
<!-- zoom slider -->
<path d="M888.4 587.4H893.6" stroke="#555" stroke-width="0.8"/>
<path d="M900 587.6H961" stroke="#8a8a8a" stroke-width="0.7"/>
<rect x="927.8" y="583.6" width="2.6" height="7.8" fill="#555" stroke="none"/>
<path d="M964.6 587.4H969.8M967.2 584.8V590" stroke="#777" stroke-width="0.8"/>
</svg>

</div></body></html>
